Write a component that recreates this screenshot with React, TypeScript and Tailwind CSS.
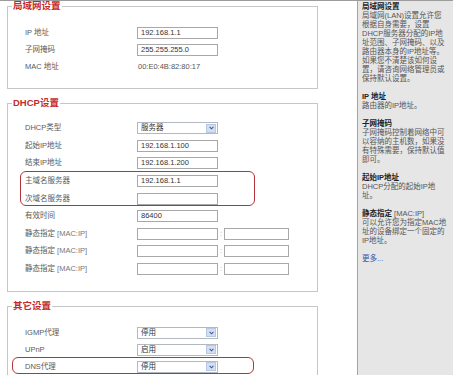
import React from "react";

const FONT = { fontFamily: '"Liberation Sans", Arial, "Noto Sans CJK SC", sans-serif' };

function Box({ text, w = "w-[81px]" }: { text?: string; w?: string }) {
  return (
    <div className={`${w} h-[12px] border border-[#a8a8a8] bg-white pl-[3px] text-[7.5px] leading-[10px] text-[#333] whitespace-nowrap overflow-hidden`}>
      {text}
    </div>
  );
}

function Select({ text }: { text: string }) {
  return (
    <div className="w-[81px] h-[12px] border border-[#b4b8c0] bg-white pl-[3px] pr-[1px] flex items-center justify-between text-[7.5px] leading-[10px] text-[#333]">
      <span>{text}</span>
      <span className="w-[10px] h-[9px] bg-[#d3def2] border border-[#b9c8e2] flex items-center justify-center">
        <svg width="5" height="4" viewBox="0 0 5 4">
          <path d="M0.6 0.8 L2.5 2.8 L4.4 0.8" fill="none" stroke="#3c5c98" strokeWidth="1.1" />
        </svg>
      </span>
    </div>
  );
}

function Row({ label, h = "h-[17px]", children }: { label: React.ReactNode; h?: string; children?: React.ReactNode }) {
  return (
    <div className={`flex items-center ${h}`}>
      <div className="w-[112px] text-[7.5px] leading-[10px] text-[#5a5a5a] whitespace-nowrap">{label}</div>
      {children}
    </div>
  );
}

function Legend({ children }: { children: React.ReactNode }) {
  return (
    <legend className="ml-[4px] px-[1px] text-[9.5px] leading-[10px] font-bold text-[#c42a2a]">{children}</legend>
  );
}

function Static() {
  return (
    <div className="flex items-center">
      <Box />
      <span className="w-[6px] text-center text-[7px] leading-[10px] text-[#aaa]">:</span>
      <Box w="w-[65px]" />
    </div>
  );
}

function Title({ children }: { children: React.ReactNode }) {
  return <div className="font-bold text-[#222]">{children}</div>;
}

export default function App() {
  return (
    <div style={FONT} className="w-[453px] h-[375px] overflow-hidden flex border-t border-[#9c9c9c] bg-white">
      <div className="w-[357px] pl-[7px] shrink-0">
        <fieldset className="w-[311px] border border-[#c6c6c6]">
          <Legend>局域网设置</Legend>
          <div className="pl-[17px] pt-[13px] pb-[13px]">
            <Row label="IP 地址"><Box text="192.168.1.1" /></Row>
            <Row label="子网掩码"><Box text="255.255.255.0" /></Row>
            <Row label="MAC 地址">
              <span className="pl-[1px] text-[7.5px] leading-[10px] text-[#555]">00:E0:4B:82:80:17</span>
            </Row>
          </div>
        </fieldset>

        <fieldset className="w-[311px] border border-[#c6c6c6] mt-[9px]">
          <Legend>DHCP设置</Legend>
          <div className="pl-[17px] pt-[11.5px] pb-[13.5px]">
            <Row h="h-[17.6px]" label="DHCP类型"><Select text="服务器" /></Row>
            <Row h="h-[17.6px]" label="起始IP地址"><Box text="192.168.1.100" /></Row>
            <Row h="h-[17.6px]" label="结束IP地址"><Box text="192.168.1.200" /></Row>
            <div className="relative">
              <Row h="h-[17.6px]" label="主域名服务器"><Box text="192.168.1.1" /></Row>
              <Row h="h-[17.6px]" label="次域名服务器"><Box /></Row>
              <div className="absolute left-[-5px] top-[-1px] w-[235px] h-[35px] border-[1.5px] border-[#b5343a] rounded-[6px] pointer-events-none" />
            </div>
            <Row h="h-[17.6px]" label="有效时间"><Box text="86400" /></Row>
            <Row h="h-[17.6px]" label={<>静态指定 <span className="text-[#777]">[MAC:IP]</span></>}><Static /></Row>
            <Row h="h-[17.6px]" label={<>静态指定 <span className="text-[#777]">[MAC:IP]</span></>}><Static /></Row>
            <Row h="h-[17.6px]" label={<>静态指定 <span className="text-[#777]">[MAC:IP]</span></>}><Static /></Row>
          </div>
        </fieldset>

        <fieldset className="w-[311px] border border-[#c6c6c6] mt-[9px]">
          <Legend>其它设置</Legend>
          <div className="pl-[17px] pt-[13px] pb-[13px]">
            <Row label="IGMP代理"><Select text="停用" /></Row>
            <Row label="UPnP"><Select text="启用" /></Row>
            <div className="relative">
              <Row label="DNS代理"><Select text="停用" /></Row>
              <div className="absolute left-[-13px] top-[-1px] w-[242px] h-[17px] border-[1.5px] border-[#b5343a] rounded-[6px] pointer-events-none" />
            </div>
          </div>
        </fieldset>
      </div>

      <div className="flex-1 border-l border-[#a4a4a4] bg-[#e6e6e6] pl-[4px] pt-[1px] text-[7.5px] leading-[9px] text-[#555] whitespace-nowrap">
        <div>
          <Title>局域网设置</Title>
          <div>局域网(LAN)设置允许您</div>
          <div>根据自身需要，设置</div>
          <div>DHCP服务器分配的IP地</div>
          <div>址范围、子网掩码、以及</div>
          <div>路由器本身的IP地址等。</div>
          <div>如果您不清楚该如何设</div>
          <div>置，请咨询网络管理员或</div>
          <div>保持默认设置。</div>
        </div>
        <div className="mt-[9px]">
          <Title>IP 地址</Title>
          <div>路由器的IP地址。</div>
        </div>
        <div className="mt-[9px]">
          <Title>子网掩码</Title>
          <div>子网掩码控制着网络中可</div>
          <div>以容纳的主机数，如果没</div>
          <div>有特殊需要，保持默认值</div>
          <div>即可。</div>
        </div>
        <div className="mt-[9px]">
          <Title>起始IP地址</Title>
          <div>DHCP分配的起始IP地</div>
          <div>址。</div>
        </div>
        <div className="mt-[9px]">
          <div><span className="font-bold text-[#222]">静态指定</span> [MAC:IP]</div>
          <div>可以允许您为指定MAC地</div>
          <div>址的设备绑定一个固定的</div>
          <div>IP地址。</div>
        </div>
        <div className="mt-[9px] text-[#3553a8]">更多...</div>
      </div>
    </div>
  );
}
